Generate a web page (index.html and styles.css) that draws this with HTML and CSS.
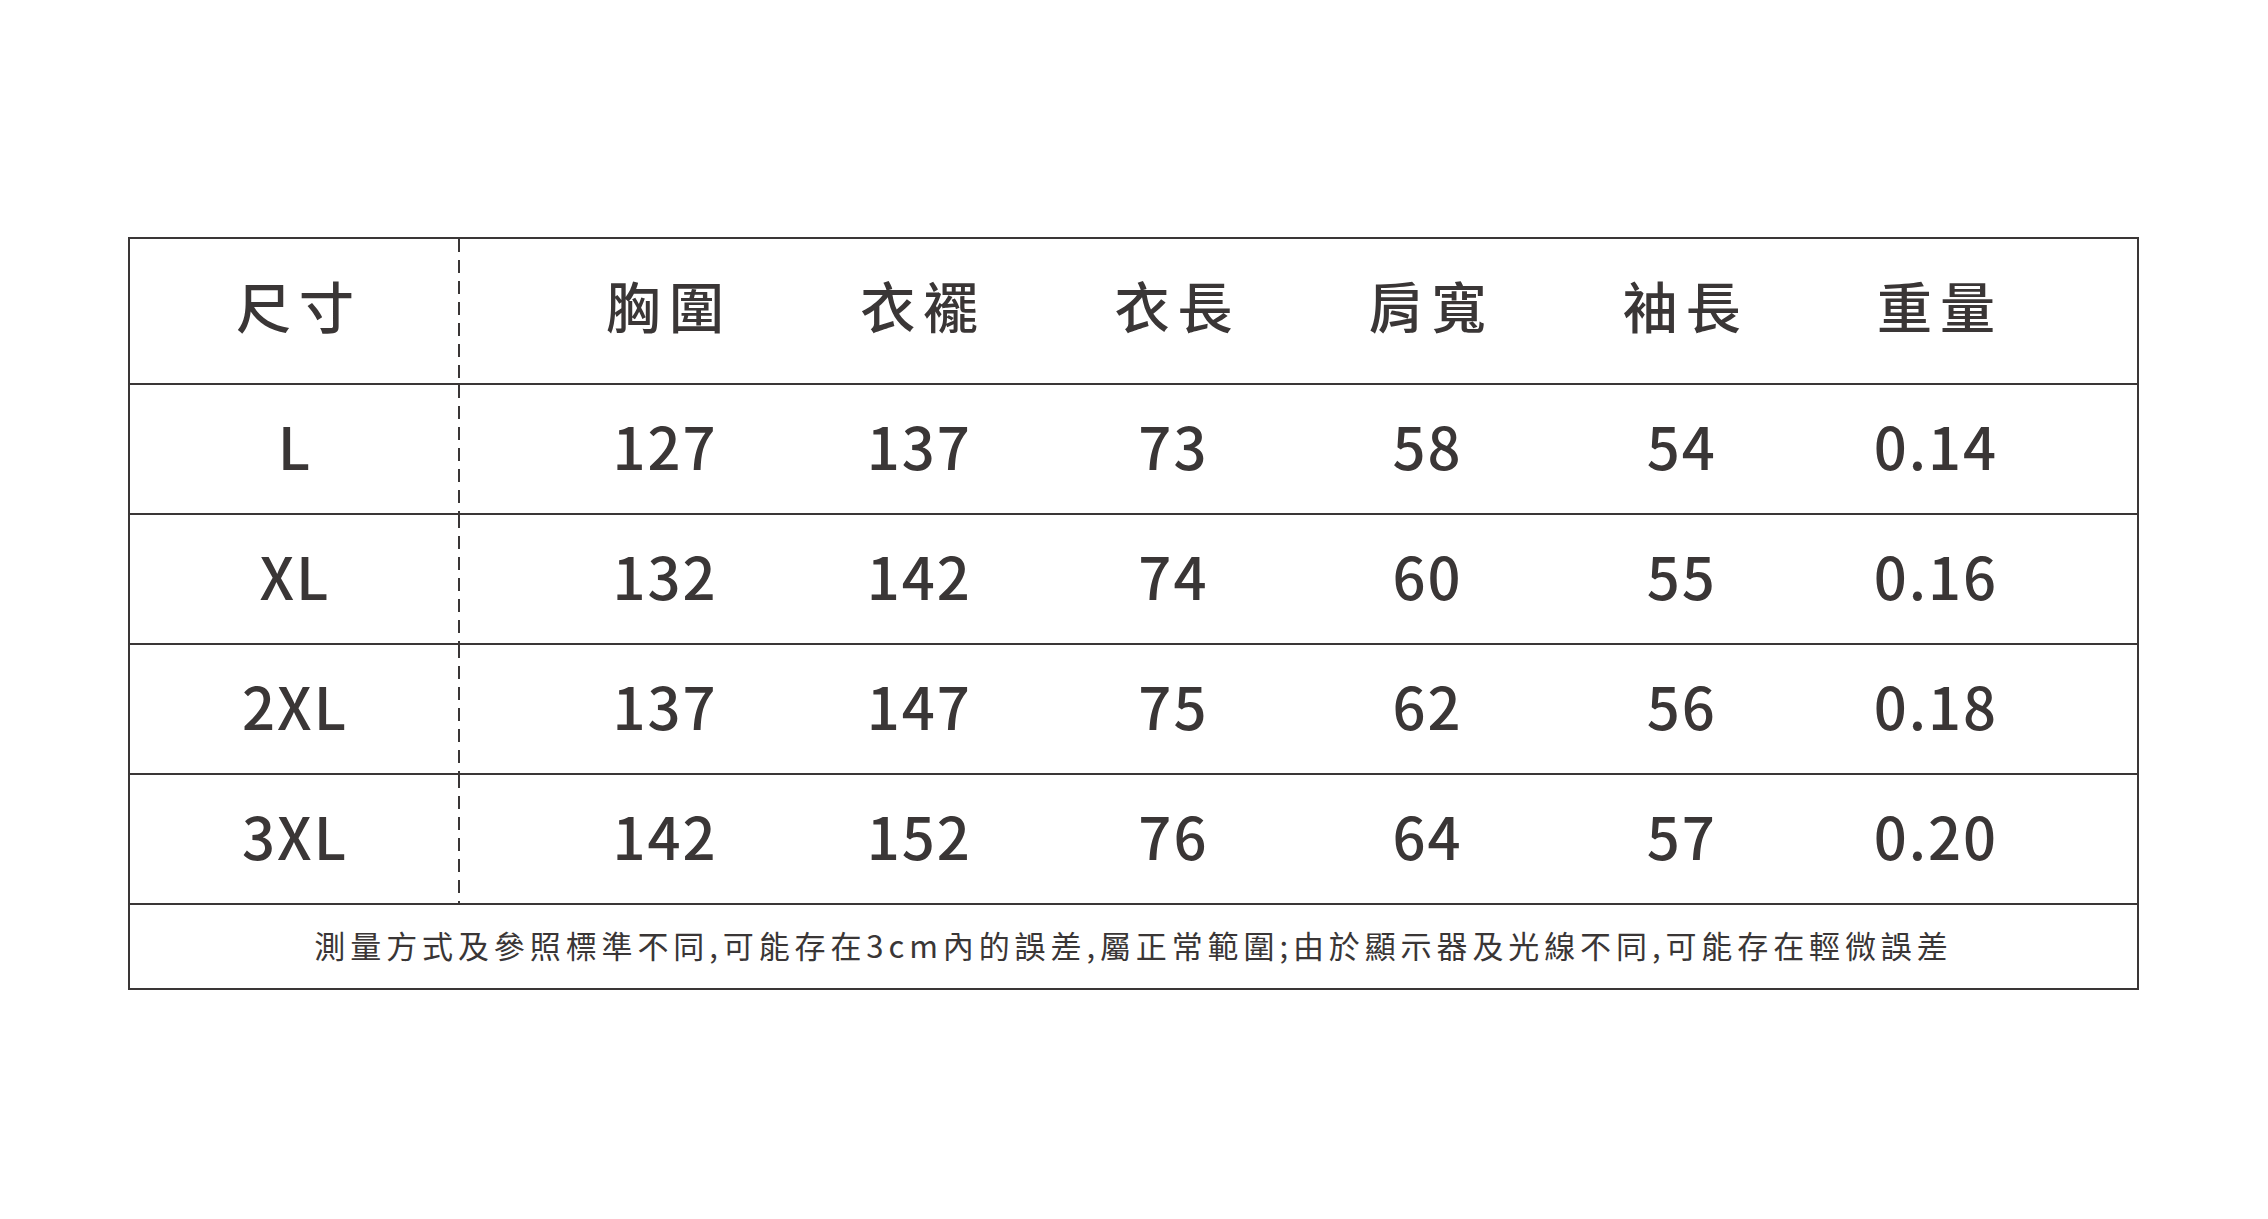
FILE: index.html
```html
<!DOCTYPE html>
<html lang="zh-Hant">
<head>
<meta charset="utf-8">
<title>尺寸表</title>
<link rel="stylesheet" href="styles.css">
</head>
<body>
<div class="chart">
  <div class="row head">
    <div class="size">尺寸</div>
    <div class="vals">
      <div class="cell">胸圍</div>
      <div class="cell">衣襬</div>
      <div class="cell">衣長</div>
      <div class="cell">肩寬</div>
      <div class="cell">袖長</div>
      <div class="cell">重量</div>
    </div>
  </div>
  <div class="row data">
    <div class="size">L</div>
    <div class="vals">
      <div class="cell">127</div><div class="cell">137</div><div class="cell">73</div>
      <div class="cell">58</div><div class="cell">54</div><div class="cell">0.14</div>
    </div>
  </div>
  <div class="row data">
    <div class="size">XL</div>
    <div class="vals">
      <div class="cell">132</div><div class="cell">142</div><div class="cell">74</div>
      <div class="cell">60</div><div class="cell">55</div><div class="cell">0.16</div>
    </div>
  </div>
  <div class="row data">
    <div class="size">2XL</div>
    <div class="vals">
      <div class="cell">137</div><div class="cell">147</div><div class="cell">75</div>
      <div class="cell">62</div><div class="cell">56</div><div class="cell">0.18</div>
    </div>
  </div>
  <div class="row data">
    <div class="size">3XL</div>
    <div class="vals">
      <div class="cell">142</div><div class="cell">152</div><div class="cell">76</div>
      <div class="cell">64</div><div class="cell">57</div><div class="cell">0.20</div>
    </div>
  </div>
  <div class="note">測量方式及參照標準不同,可能存在3cm內的誤差,屬正常範圍;由於顯示器及光線不同,可能存在輕微誤差</div>
</div>
</body>
</html>
```

FILE: styles.css
```css
html, body {
  margin: 0;
  padding: 0;
  background: #ffffff;
}
body {
  font-family: "Noto Sans CJK TC", "Noto Sans CJK SC", "Noto Sans", sans-serif;
  color: #3a3636;
  padding: 237px 0 0 128px;
}
.chart {
  width: 2011px;
  border: 2px solid #3a3636;
  box-sizing: border-box;
}
.row {
  display: flex;
  border-bottom: 2px solid #3a3636;
  box-sizing: border-box;
}
.head { height: 146px; }
.data { height: 130px; }
.size {
  width: 330px;
  flex: none;
  display: flex;
  align-items: center;
  justify-content: center;
  box-sizing: border-box;
  background-image: linear-gradient(to bottom, #3a3636 0, #3a3636 13px, transparent 13px);
  background-size: 2px 21px;
  background-repeat: repeat-y;
  background-position: right top;
}
.vals {
  flex: 1;
  display: flex;
  padding: 0 74px 0 78px;
}
.cell {
  flex: 1;
  display: flex;
  align-items: center;
  justify-content: center;
  box-sizing: border-box;
}
.head .size, .head .cell {
  font-size: 55px;
  font-weight: 500;
  letter-spacing: 8px;
  text-indent: 8px;
  padding-bottom: 14px;
}
.data .size, .data .cell {
  font-size: 58px;
  font-weight: 500;
  letter-spacing: 2px;
  padding-bottom: 8px;
}
.note {
  height: 83px;
  display: flex;
  align-items: center;
  justify-content: center;
  font-size: 31px;
  font-weight: 400;
  letter-spacing: 4.9px;
  padding-bottom: 5px;
  box-sizing: border-box;
}
```
